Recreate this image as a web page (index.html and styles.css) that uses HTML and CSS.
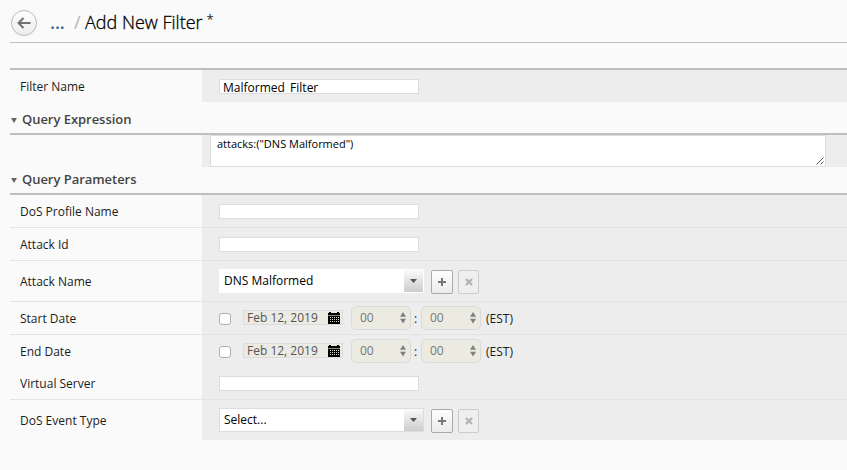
FILE: index.html
```html
<!DOCTYPE html>
<html lang="en">
<head>
<meta charset="utf-8">
<title>Add New Filter</title>
<link rel="stylesheet" href="styles.css">
</head>
<body>
<svg class="defs" width="0" height="0">
  <symbol id="calendar" viewBox="0 0 12 12"><path d="M0 1h1V0h2v1h6V0h2v1h1v11H0z"/><path d="M0 3.500h12" stroke="#88887f" stroke-width="1"/><path d="M2 5.500h9M2 7.500h9M2 9.500h9" stroke="#d4d4cc" stroke-width="1" stroke-dasharray="1 1" fill="none"/></symbol>
  <symbol id="spin" viewBox="0 0 6 12"><path d="M0 4.700 3 0l3 4.700zM0 6.800h6L3 11.500z" fill="#808080"/></symbol>
  <symbol id="plus" viewBox="0 0 8 8"><path d="M3 0h2v3h3v2H5v3H3V5H0V3h3z" fill="#777"/></symbol>
  <symbol id="cross" viewBox="0 0 8 8"><path d="M1 1l6 6M7 1L1 7" stroke="#b3b3b3" stroke-width="2.300" fill="none"/></symbol>
</svg>
<header class="header">
  <span class="back"><svg width="14" height="12" viewBox="0 0 14 12"><path d="M6.500 1 1.500 6l5 5M1.500 6H13.500" fill="none" stroke="#707070" stroke-width="2"/></svg></span>
  <span class="dots">...</span>
  <span class="slash">/</span>
  <h1 class="title">Add New Filter</h1>
  <span class="star">*</span>
</header>
<main class="form">
  <section class="group general">
    <div class="row"><label>Filter Name</label><div class="field"><input class="text" type="text" value="Malformed_Filter"></div></div>
  </section>
  <h2 class="heading"><i class="fold"></i>Query Expression</h2>
  <section class="group">
    <div class="row"><label></label><div class="field wide"><div class="area">attacks:("DNS Malformed")<svg class="grip" width="8" height="8" viewBox="0 0 8 8"><path d="M.5 7.500l7-7M4.500 7.500l3-3" stroke="#555" fill="none"/></svg></div></div></div>
  </section>
  <h2 class="heading second"><i class="fold"></i>Query Parameters</h2>
  <section class="group">
    <div class="row line"><label>DoS Profile Name</label><div class="field"><input class="text" type="text"></div></div>
    <div class="row line"><label>Attack Id</label><div class="field"><input class="text" type="text"></div></div>
    <div class="row line tall"><label>Attack Name</label><div class="field">
      <div class="select plain"><span>DNS Malformed</span><i class="drop"></i></div>
      <span class="btn add"><svg width="8" height="8"><use href="#plus"/></svg></span><span class="btn remove"><svg width="8" height="8"><use href="#cross"/></svg></span>
    </div></div>
    <div class="row line"><label>Start Date</label><div class="field">
      <span class="check"></span><span class="date">Feb 12, 2019<svg width="12" height="12"><use href="#calendar"/></svg></span>
      <span class="num">00<svg width="6" height="12"><use href="#spin"/></svg></span><span class="colon">:</span><span class="num">00<svg width="6" height="12"><use href="#spin"/></svg></span><span class="zone">(EST)</span>
    </div></div>
    <div class="row"><label>End Date</label><div class="field">
      <span class="check"></span><span class="date">Feb 12, 2019<svg width="12" height="12"><use href="#calendar"/></svg></span>
      <span class="num">00<svg width="6" height="12"><use href="#spin"/></svg></span><span class="colon">:</span><span class="num">00<svg width="6" height="12"><use href="#spin"/></svg></span><span class="zone">(EST)</span>
    </div></div>
    <div class="row line"><label>Virtual Server</label><div class="field"><input class="text" type="text"></div></div>
    <div class="row tall last"><label>DoS Event Type</label><div class="field">
      <div class="select"><span>Select...</span><i class="drop"></i></div>
      <span class="btn add"><svg width="8" height="8"><use href="#plus"/></svg></span><span class="btn remove"><svg width="8" height="8"><use href="#cross"/></svg></span>
    </div></div>
  </section>
</main>
</body>
</html>
```
FILE: styles.css
```css
* { box-sizing: border-box; }
body { margin: 0; background: #fafafa; color: #1c1c1c; font: 12px/16px "Open Sans", sans-serif; overflow: hidden; }
svg { display: block; flex: none; }
.defs { position: absolute; }
.header { display: flex; align-items: flex-start; height: 43px; margin-left: 10px; border-bottom: 1px solid #bfbfbf; }
.back { display: flex; align-items: center; justify-content: center; width: 26px; height: 26px; margin: 10px 0 0 1px; border: 1px solid #b9b9b9; border-radius: 50%; background: linear-gradient(#fff, #ececec); }
.dots { width: 24px; margin: 10px 0 0 13px; font-size: 18px; line-height: 24px; font-weight: 600; color: #3d6591; }
.slash { width: 11px; margin-top: 10px; font-size: 18px; line-height: 24px; color: #b5b5b5; }
.title { margin: 10px 0 0; font-size: 18px; line-height: 24px; font-weight: 300; color: #000; -webkit-text-stroke: .3px #000; }
.star { margin: 10px 0 0 4px; font-size: 13px; line-height: 18px; color: #222; }
.form { margin-left: 10px; padding-top: 25px; }
.group { border-top: 2px solid #bebebe; }
.heading { display: flex; align-items: center; height: 31px; margin: 0; padding-top: 3px; font-size: 13px; font-weight: 600; letter-spacing: -.04px; color: #444; }
.heading.second { height: 26px; padding: 0 0 2px; }
.fold { width: 6px; height: 5px; margin: 3px 5px 0 1px; background: #666; clip-path: polygon(0 0, 100% 0, 50% 100%); }
.row { display: flex; height: 32px; }
.row.line { height: 33px; border-bottom: 1px solid #e4e4e4; }
.row.tall { height: 40px; }
.row.line.tall { height: 41px; }
.row label { width: 192px; padding: 9px 0 0 10px; }
.row.tall label { padding-top: 13px; }
.field { display: flex; align-items: flex-start; flex: 1; padding-left: 17px; background: #ededed; }
.text { width: 200px; height: 15px; margin: 9px 0 0; padding: 2px 3px 0; border: 1px solid #dcdcdc; background: #fff; color: #000; font: 12px/12px "Open Sans", sans-serif; }
.field.wide { padding-left: 8px; }
.area { position: relative; width: 616px; height: 32px; padding: 0 6px; border: 1px solid #dcdcdc; background: #fff; color: #000; font-size: 11px; line-height: 16px; }
.grip { position: absolute; right: 1px; bottom: 1px; }
.select { display: flex; width: 205px; height: 24px; margin-top: 8px; border: 1px solid #dcdcdc; background: #fff; color: #000; }
.select.plain { border-color: #fff; }
.select span { flex: 1; padding: 3px 0 0 4px; }
.drop { display: flex; width: 19px; height: 22px; background: linear-gradient(#fafafa, #ccc); }
.drop::after { content: ""; width: 7px; height: 4px; margin: 9px 0 0 6px; background: #555; clip-path: polygon(0 0, 100% 0, 50% 100%); }
.btn { display: flex; align-items: center; justify-content: center; height: 24px; margin-top: 9px; border: 1px solid #a9a9a9; border-radius: 2px; background: linear-gradient(#fdfdfd, #ececec); }
.add { width: 22px; margin-left: 7px; }
.remove { width: 21px; margin-left: 5px; padding: 0 0 1px; border-color: #ccc; background: #efefef; }
.check { width: 12px; height: 12px; margin-top: 11px; border: 1px solid #b0b0b0; border-radius: 3px; background: #fff; }
.date { display: flex; justify-content: space-between; width: 100px; height: 15px; margin: 8px 8px 0 12px; padding: 0 2px 0 3px; border: 1px solid #dcdcdc; background: #ebebe4; color: #545454; line-height: 13px; }
.date svg { fill: #000; margin-top: 1px; }
.num { display: flex; justify-content: space-between; width: 60px; height: 24px; margin-top: 4px; padding: 0 4px 0 8px; border: 1px solid #dadada; border-radius: 5px; background: #ebebe2; color: #777; line-height: 22px; }
.num svg { margin-top: 5px; }
.colon { width: 10px; padding: 9px 0 0 3px; }
.zone { padding: 9px 0 0 5px; }
```
